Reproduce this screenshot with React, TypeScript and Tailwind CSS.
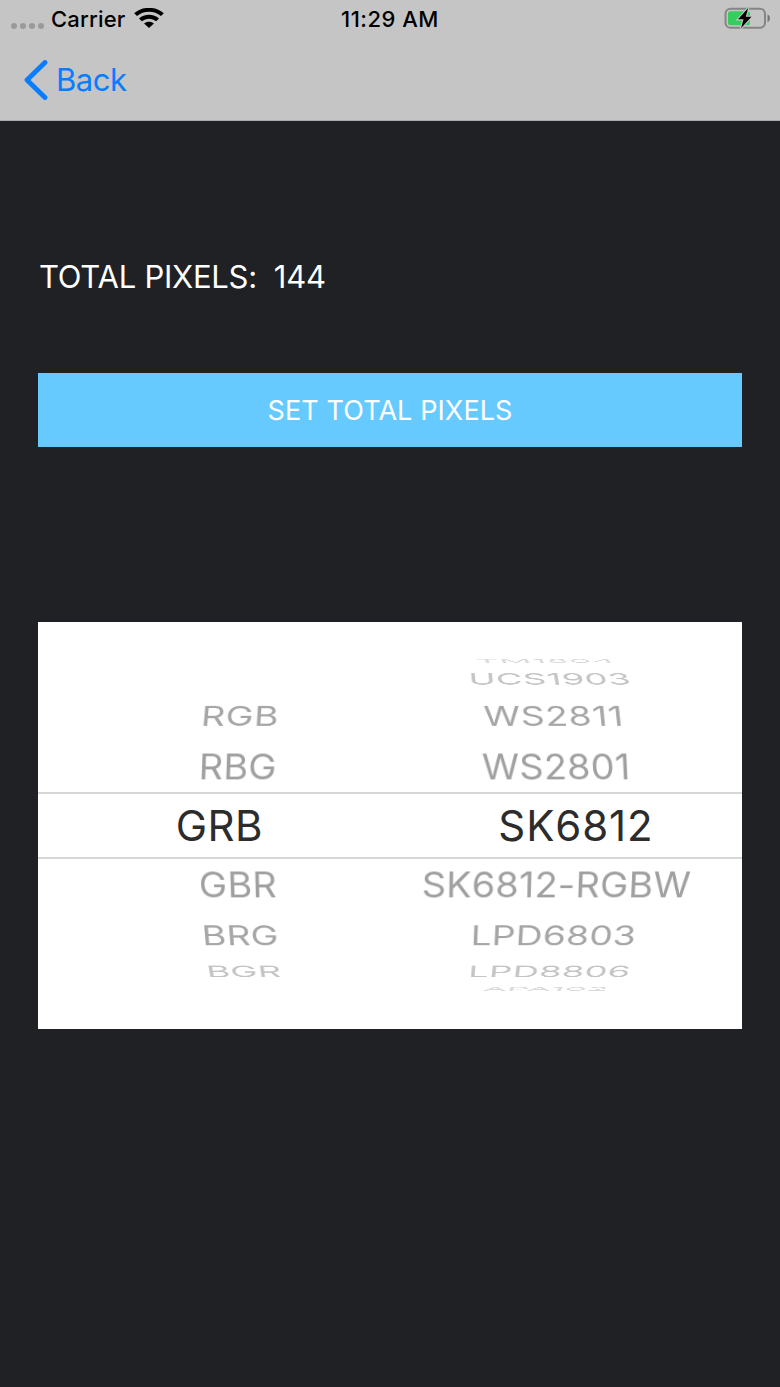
type WheelRow = {
    angle: number;
    radius: number;
    order: string;
    chip: string;
    style: string;
};

const rows: WheelRow[] = [
    { angle: 77, radius: 181.5, order: "", chip: "TM1804", style: "text-[#dadada] tracking-[0.6px]" },
    { angle: 60, radius: 177.5, order: "", chip: "UCS1903", style: "text-[#c4c4c4] tracking-[0.4px]" },
    { angle: 40, radius: 175, order: "RGB", chip: "WS2811", style: "text-[#a6a6a6] tracking-[0.6px]" },
    { angle: 20, radius: 175, order: "RBG", chip: "WS2801", style: "text-[#a0a0a0] tracking-[0.2px]" },
    { angle: -20, radius: 172, order: "GBR", chip: "SK6812-RGBW", style: "text-[#a0a0a0] tracking-[0.2px]" },
    { angle: -40, radius: 174, order: "BRG", chip: "LPD6803", style: "text-[#a6a6a6] tracking-[0.2px]" },
    { angle: -60, radius: 176, order: "BGR", chip: "LPD8806", style: "text-[#c4c4c4] tracking-[0.3px]" },
    { angle: -77, radius: 180, order: "", chip: "APA102", style: "text-[#dadada]" },
];

function StatusBar() {
    return (
        <div className="grid h-[38px] grid-cols-3 items-center text-[22px] font-medium text-black">
            <div className="flex items-center pl-[11px]">
                <div className="mt-[13px] flex gap-[3px]">
                    <span className="size-[6px] rounded-full bg-[#999]" />
                    <span className="size-[6px] rounded-full bg-[#999]" />
                    <span className="size-[6px] rounded-full bg-[#999]" />
                    <span className="size-[6px] rounded-full bg-[#999]" />
                </div>
                <span className="ml-[7px] tracking-[0.2px]">Carrier</span>
                <svg
                    className="-mt-px ml-[8px] h-[21px] w-[30px]"
                    viewBox="0 0 28 21"
                    preserveAspectRatio="none"
                    fill="none"
                    stroke="#000"
                    strokeWidth="3.9"
                >
                    <path d="M1.5 6.6C8.5 .2 19.5 .2 26.5 6.6" />
                    <path d="M6 11.9C10.5 7.7 17.5 7.7 22 11.9" />
                    <path
                        d="M14 20L9.4 15.6C12 13.1 16 13.1 18.6 15.6Z"
                        fill="#000"
                        stroke="none"
                    />
                </svg>
            </div>
            <span className="text-center tracking-[0.5px]">11:29 AM</span>
            <svg
                className="mb-[2px] ml-auto mr-[9px] h-[24px] w-[47px]"
                viewBox="0 0 47 24"
            >
                <rect
                    x="1.5"
                    y="2.8"
                    width="39.5"
                    height="19"
                    rx="5"
                    fill="none"
                    stroke="#858585"
                    strokeWidth="2"
                />
                <path d="M43.5 8.5C46.8 9.7 46.8 14.9 43.5 16.1Z" fill="#777" />
                <rect x="4" y="5.3" width="22" height="14" rx="2.5" fill="#35cd5b" />
                <path
                    d="M24.2 2L14 13.3H19.5L17 22.3L27.5 10.8H21.8Z"
                    fill="#000"
                    stroke="#c5c5c5"
                    strokeWidth="2.2"
                    paintOrder="stroke"
                />
            </svg>
        </div>
    );
}

function NavBar() {
    return (
        <button className="flex h-[83px] items-center pl-[24px] text-[31px] text-[#087dff]">
            <svg
                className="h-[40px] w-[24px]"
                viewBox="0 0 24 40"
                fill="none"
                stroke="currentColor"
                strokeWidth="4.8"
                strokeLinecap="round"
                strokeLinejoin="round"
            >
                <path d="M21 2.5L3 20L21 37.5" />
            </svg>
            <span className="mt-px ml-[8px] tracking-[-0.5px]">Back</span>
        </button>
    );
}

function Picker() {
    return (
        <div className="mt-[175px] grid h-[407px] grid-cols-1 overflow-hidden bg-white text-[38px] leading-none">
            {rows.map((row) => (
                <div
                    key={row.chip}
                    className={`col-start-1 row-start-1 flex items-center pl-px ${row.style}`}
                    style={{
                        transform: `perspective(1900px) translateZ(${-row.radius}px) rotateX(${
                            row.angle
                        }deg) translateZ(${row.radius}px)`,
                    }}
                >
                    <span className="w-[396px] text-center">{row.order}</span>
                    {/* the longest name starts left of its column */}
                    <span
                        className={
                            row.chip === "SK6812-RGBW"
                                ? "-ml-[13px] whitespace-nowrap"
                                : "w-[244px] text-center"
                        }
                    >
                        {row.chip}
                    </span>
                </div>
            ))}
            <div className="col-start-1 row-start-1 flex h-[67px] items-center self-center border-y-2 border-[#d6d6d6] bg-white text-[42px] text-[#2c2c2c]">
                <span className="w-[364px] pt-px pl-[3px] text-center tracking-[0.5px]">
                    GRB
                </span>
                <span className="w-[348px] pt-px pl-[12px] text-center tracking-[0.9px]">
                    SK6812
                </span>
            </div>
        </div>
    );
}

function App() {
    return (
        <div className="flex h-[1387px] w-[780px] flex-col overflow-hidden bg-[#202124] font-['Inter',sans-serif]">
            <header className="h-[121px] border-b border-[#aaa] bg-[#c5c5c5]">
                <StatusBar />
                <NavBar />
            </header>
            <main className="flex flex-col px-[38px]">
                <p className="mt-[136px] h-[40px] whitespace-pre pl-[1px] text-[31px] leading-[40px] tracking-[-0.25px] text-white">
                    TOTAL PIXELS:  144
                </p>
                <button className="mt-[76px] h-[74px] bg-[#66caff] pt-[2px] text-[27px] tracking-[0.1px] text-white">
                    SET TOTAL PIXELS
                </button>
                <Picker />
            </main>
        </div>
    );
}

export default App;
